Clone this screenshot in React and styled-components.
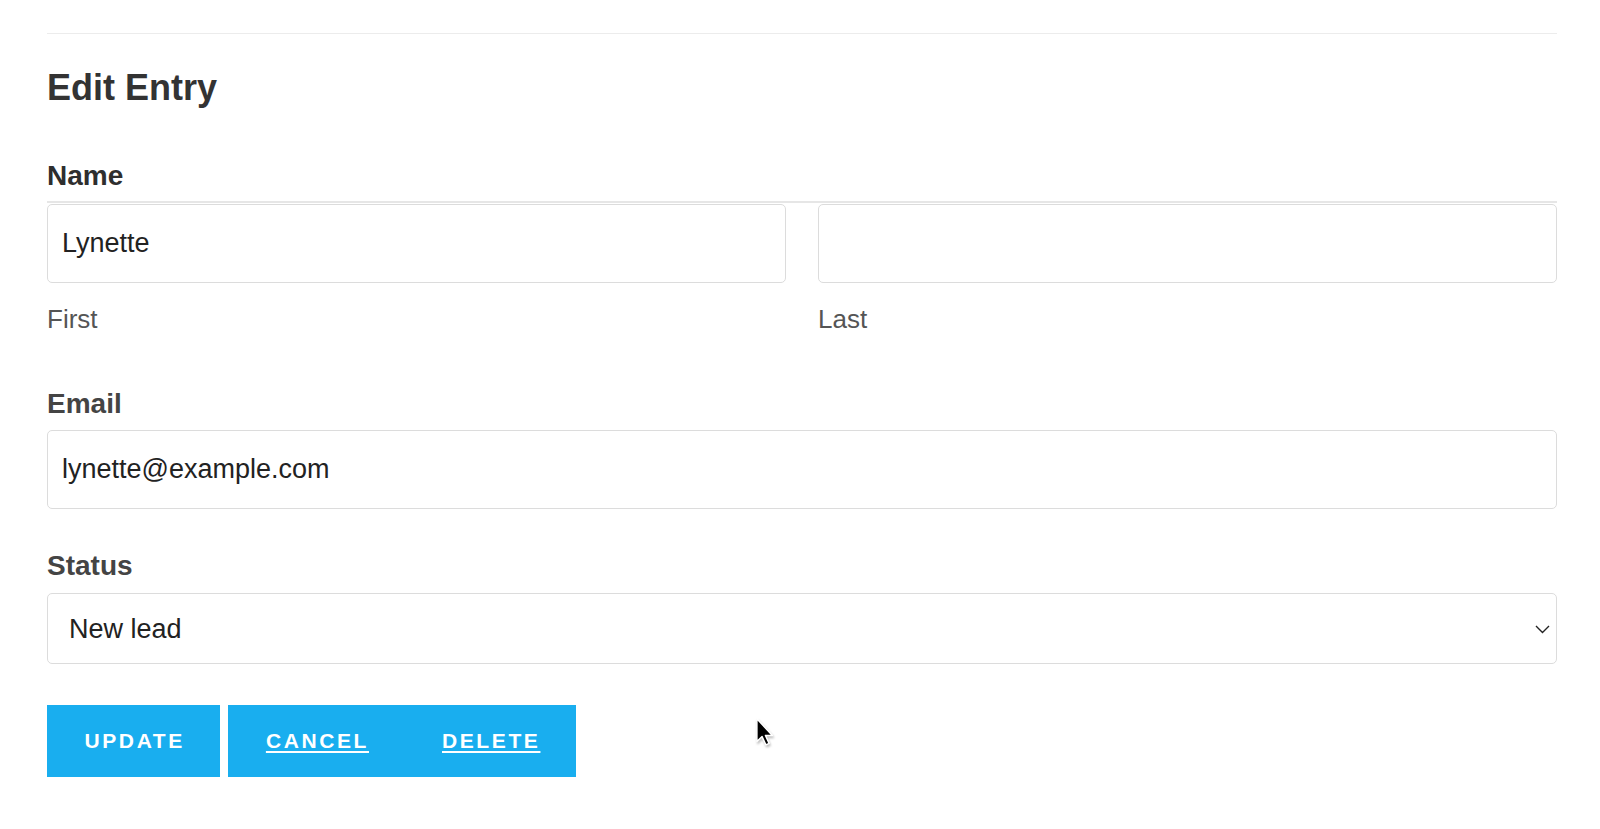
import React from "react";
import styled, { createGlobalStyle } from "styled-components";

const GlobalStyle = createGlobalStyle`
  html, body {
    margin: 0;
    padding: 0;
    background: #ffffff;
  }
  body {
    font-family: "Liberation Sans", Arial, Helvetica, sans-serif;
    color: #333333;
  }
  * {
    box-sizing: border-box;
  }
`;

const Page = styled.div`
  position: relative;
  padding: 33px 43px 40px 47px;
  min-height: 829px;
`;

const Divider = styled.hr`
  margin: 0;
  border: 0;
  border-top: 1px solid #ececec;
`;

const Title = styled.h2`
  margin: 34px 0 0;
  font-size: 36px;
  line-height: 40px;
  font-weight: 700;
  color: #333333;
`;

const Form = styled.form`
  display: flex;
  flex-direction: column;
  margin-top: 52px;
`;

const Field = styled.div`
  display: flex;
  flex-direction: column;
  margin-top: ${(p) => p.$top || 0}px;
`;

const Label = styled.label`
  font-size: 28px;
  line-height: 32px;
  font-weight: 700;
  color: ${(p) => p.$color || "#444444"};
  margin-bottom: ${(p) => p.$gap ?? 10}px;
`;

const NameRow = styled.div`
  display: grid;
  grid-template-columns: 1fr 1fr;
  column-gap: 32px;
  border-top: 2px solid #e6e6e6;
  padding-top: 1px;
`;

const NameCol = styled.div`
  display: flex;
  flex-direction: column;
`;

const TextInput = styled.input`
  width: 100%;
  height: 79px;
  padding: 0 14px;
  border: 1px solid #dcdcdc;
  border-radius: 5px;
  background: #ffffff;
  font-family: inherit;
  font-size: 27px;
  color: #222222;
  outline: none;
`;

const SubLabel = styled.span`
  margin-top: 21px;
  font-size: 26px;
  line-height: 30px;
  color: #555555;
`;

const SelectWrap = styled.div`
  position: relative;
`;

const Select = styled.select`
  width: 100%;
  height: 71px;
  padding: 0 40px 0 21px;
  border: 1px solid #dcdcdc;
  border-radius: 5px;
  background: #ffffff;
  font-family: inherit;
  font-size: 27px;
  color: #222222;
  appearance: none;
  -webkit-appearance: none;
  outline: none;
`;

const Chevron = styled.svg`
  position: absolute;
  right: 7px;
  top: 50%;
  width: 15px;
  height: 9px;
  margin-top: -4px;
  pointer-events: none;
`;

const Actions = styled.div`
  display: flex;
  align-items: stretch;
  margin-top: 41px;
`;

const ButtonGroup = styled.div`
  display: flex;
  margin-left: ${(p) => p.$offset || 0}px;
`;

const ActionButton = styled.button`
  display: flex;
  align-items: center;
  height: 72px;
  padding: 0 35.5px 0 37.5px;
  border: 0;
  background: #19aeef;
  color: #ffffff;
  font-family: inherit;
  font-size: 21px;
  font-weight: 700;
  letter-spacing: 2.6px;
  text-transform: uppercase;
  text-decoration: ${(p) => (p.$link ? "underline" : "none")};
  text-underline-offset: 3px;
  text-decoration-thickness: 2px;
  cursor: pointer;
`;

const Cursor = styled.svg`
  position: absolute;
  left: 756px;
  top: 718px;
  width: 18px;
  height: 28px;
  filter: drop-shadow(1px 2px 1px rgba(0, 0, 0, 0.25));
`;

const App = () => {
  return (
    <>
      <GlobalStyle />
      <Page>
        <Divider />
        <Title>Edit Entry</Title>
        <Form onSubmit={(e) => e.preventDefault()}>
          <Field>
            <Label $color="#2e2e2e" $gap={9}>
              Name
            </Label>
            <NameRow>
              <NameCol>
                <TextInput defaultValue="Lynette" />
                <SubLabel>First</SubLabel>
              </NameCol>
              <NameCol>
                <TextInput defaultValue="" />
                <SubLabel>Last</SubLabel>
              </NameCol>
            </NameRow>
          </Field>

          <Field $top={54}>
            <Label>Email</Label>
            <TextInput defaultValue="lynette@example.com" />
          </Field>

          <Field $top={41}>
            <Label $gap={11}>Status</Label>
            <SelectWrap>
              <Select defaultValue="new">
                <option value="new">New lead</option>
                <option value="contacted">Contacted</option>
                <option value="closed">Closed</option>
              </Select>
              <Chevron viewBox="0 0 15 9">
                <path
                  d="M1 1 L7.5 7.5 L14 1"
                  fill="none"
                  stroke="#222"
                  strokeWidth="1.4"
                />
              </Chevron>
            </SelectWrap>
          </Field>

          <Actions>
            <ActionButton type="submit">Update</ActionButton>
            <ButtonGroup $offset={8}>
              <ActionButton type="button" $link>
                Cancel
              </ActionButton>
              <ActionButton type="button" $link>
                Delete
              </ActionButton>
            </ButtonGroup>
          </Actions>
        </Form>

        <Cursor viewBox="0 0 12 19">
          <path
            d="M0.5 0.5 L0.5 16 L4 12.6 L6.6 18.2 L8.8 17.2 L6.3 11.8 L11 11.8 Z"
            fill="#000"
            stroke="#fff"
            strokeWidth="1"
            strokeLinejoin="round"
          />
        </Cursor>
      </Page>
    </>
  );
};

export default App;
